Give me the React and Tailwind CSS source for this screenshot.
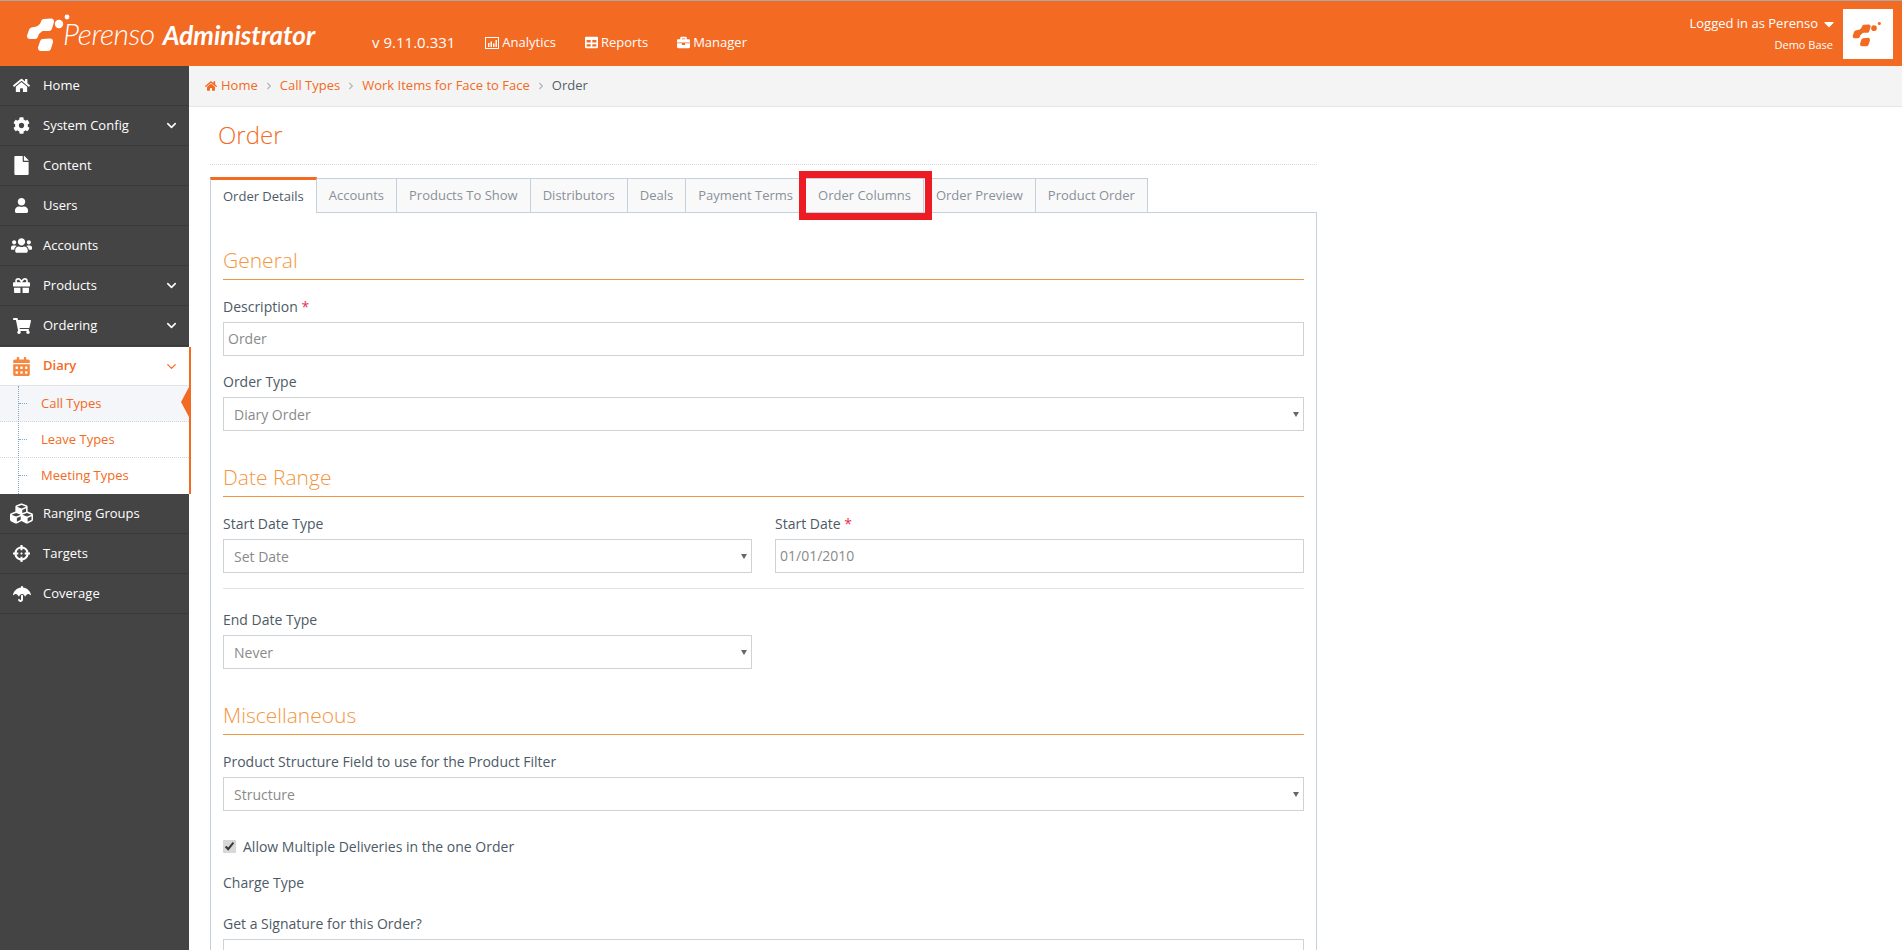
import { ChevronDown } from 'lucide-react';
import { FaBriefcase, FaCalendarAlt, FaCaretDown, FaChevronRight, FaCog, FaCrosshairs, FaCubes, FaFile, FaGift, FaHome, FaShoppingCart, FaTable, FaUmbrella, FaUser, FaUsers } from 'react-icons/fa';

const menuTop = [
  { label: 'Home', icon: FaHome, size: 'text-[17px]' },
  { label: 'System Config', icon: FaCog, size: 'text-[17px]', arrow: true },
  { label: 'Content', icon: FaFile, size: 'text-[19px]' },
  { label: 'Users', icon: FaUser, size: 'text-[15px]' },
  { label: 'Accounts', icon: FaUsers, size: 'text-[21px]' },
  { label: 'Products', icon: FaGift, size: 'text-[17px]', arrow: true },
  { label: 'Ordering', icon: FaShoppingCart, size: 'text-[18px]', arrow: true },
];
const menuBottom = [
  { label: 'Ranging Groups', icon: FaCubes, size: 'text-[23px]' },
  { label: 'Targets', icon: FaCrosshairs, size: 'text-[17px]' },
  { label: 'Coverage', icon: FaUmbrella, size: 'text-[18px]' },
];
const subItems = ['Call Types', 'Leave Types', 'Meeting Types'];
const tabs = ['Order Details', 'Accounts', 'Products To Show', 'Distributors', 'Deals', 'Payment Terms', 'Order Columns', 'Order Preview', 'Product Order'];

function LogoMark({ className, color }) {
  return (
    <svg viewBox="26 10 48 40" className={className} fill={color} stroke={color} strokeLinejoin="round">
      <polygon points="32,28.5 37,27.5 35,34 30,34" strokeWidth="6" />
      <polygon points="44,20 51,19.5 49,26 42,26" strokeWidth="6" />
      <polygon points="36,28 44,21 43,26 37,31" strokeWidth="4" />
      <polygon points="43,40 50,39.5 48,46 41,46" strokeWidth="6" />
      <circle cx="59" cy="22" r="4.2" stroke="none" />
      <circle cx="67" cy="15" r="2.4" stroke="none" />
    </svg>
  );
}

function BarBox({ className }) {
  return (
    <svg viewBox="0 0 14 12" className={className} fill="none">
      <rect x="0.5" y="0.5" width="13" height="11" stroke="currentColor" />
      <path d="M3 6h1.5v4H3zM5.5 4.5H7V10H5.5zM8 6.5h1.5V10H8zM10.5 3H12v7h-1.5z" fill="currentColor" />
    </svg>
  );
}

function MenuRow({ item }) {
  const Icon = item.icon;
  return (
    <div className="flex h-10 items-center border-b border-[#3a3a3a] text-[13px] text-white">
      <div className="flex w-[43px] justify-center"><Icon className={item.size} /></div>
      <span className="flex-1">{item.label}</span>
      {item.arrow && <ChevronDown size={15} strokeWidth={2.5} className="mr-[10px]" />}
    </div>
  );
}

function Section({ title }) {
  return (
    <div className="mb-[17px] flex h-[50px] items-end border-b border-[#f0983f] pb-[3px] text-[21px] font-light text-[#f4963d]">
      {title}
    </div>
  );
}

function Field({ label, required, children, className = 'mb-4' }) {
  return (
    <div className={className}>
      <label className="mb-[6px] block h-[19px] pt-[1px] text-[14px] leading-[18px] text-[#4d5a66]">
        {label}
        {required && <span className="text-[#e8304f]"> *</span>}
      </label>
      {children}
    </div>
  );
}

function TextBox({ value }) {
  return <input readOnly value={value} className="h-[34px] w-full border border-[#d0d3d6] bg-white px-[4px] pb-[1px] text-[14px] text-[#8a8a8a] outline-none" />;
}

function SelectBox({ value }) {
  return (
    <div className="relative h-[34px] w-full border border-[#d0d3d6] bg-white pl-[10px] text-[14px] leading-[33px] text-[#8a8a8a]">
      {value}
      <span className="absolute right-[4px] top-[14px] h-0 w-0 border-x-[3px] border-t-[5px] border-x-transparent border-t-[#666]" />
    </div>
  );
}

export default function App() {
  return (
    <div className="h-[950px] overflow-hidden bg-white text-[13px]" style={{ fontFamily: '"Open Sans", sans-serif' }}>
      <header className="flex h-[66px] items-center border-t border-[#a8a8a8] bg-[#f36a23] text-white">
        <LogoMark className="ml-[26px] mt-[-4px] h-[40px] w-[48px]" color="#ffffff" />
        <div className="ml-[-11px] mt-[-1px] flex items-baseline italic" style={{ fontFamily: 'Lato, sans-serif' }}>
          <span className="text-[30px] font-light tracking-[-0.5px]">Perenso</span>
          <span className="ml-[8px] text-[26px] font-bold">Administrator</span>
        </div>
        <span className="ml-[57px] mt-[18px] text-[15px]">v 9.11.0.331</span>
        <nav className="ml-[30px] mt-[18px] flex items-center gap-[29px] text-[13px]">
          <span className="flex items-center gap-[3px]"><BarBox className="h-[12px] w-[14px]" />Analytics</span>
          <span className="flex items-center gap-[3px]"><FaTable className="text-[13px]" />Reports</span>
          <span className="flex items-center gap-[3px]"><FaBriefcase className="text-[13px]" />Manager</span>
        </nav>
        <div className="ml-auto mr-[10px] text-right">
          <div className="mr-[-4px] flex items-center justify-end gap-[3px] text-[13px]">Logged in as Perenso <FaCaretDown className="text-[16px]" /></div>
          <div className="mt-[3px] text-[11px]">Demo Base</div>
        </div>
        <div className="mr-[9px] flex h-[50px] w-[50px] items-center justify-center bg-white">
          <LogoMark className="h-[27px] w-[32px]" color="#f36a23" />
        </div>
      </header>

      <div className="flex h-[884px]">
        <aside className="w-[189px] shrink-0 bg-[#444444]">
          {menuTop.map((item) => <MenuRow key={item.label} item={item} />)}
          <div className="relative mt-[1px] w-[191px] border-r-[2px] border-[#f36a23] bg-white">
            <div className="flex h-[39px] items-center border-b border-[#e3e3e3] text-[13px] font-semibold text-[#f36a23]">
              <div className="flex w-[43px] justify-center"><FaCalendarAlt className="text-[19px] text-[#f5873f]" /></div>
              <span className="flex-1">Diary</span>
              <ChevronDown size={15} strokeWidth={2} className="mr-[10px]" />
            </div>
            <div className="relative">
              {subItems.map((label, i) => (
                <div key={label} className={`relative flex h-[36px] items-center pl-[41px] text-[13px] text-[#f36a23] ${i === 0 ? 'bg-[#f4f6f9]' : ''} ${i < 2 ? 'border-b border-dotted border-[#d5d5d5]' : ''}`}>
                  <span className="absolute left-[19px] top-[17px] w-[8px] border-t border-dotted border-[#7fa8cc]" />
                  {label}
                </div>
              ))}
              <span className="absolute bottom-0 left-[18px] top-0 border-l border-dotted border-[#7fa8cc]" />
              <span className="absolute right-0 top-[1px] h-0 w-0 border-y-[15px] border-r-[8px] border-y-transparent border-r-[#f36a23]" />
            </div>
          </div>
          {menuBottom.map((item) => <MenuRow key={item.label} item={item} />)}
        </aside>

        <main className="min-w-0 flex-1">
          <div className="flex h-[41px] items-center gap-[7px] border-b border-[#e5e5e5] bg-[#f4f4f4] pl-[16px] text-[13px] text-[#f36a23]">
            <span className="flex items-center gap-[4px]"><FaHome className="text-[12px]" />Home</span>
            <FaChevronRight className="text-[8px] text-[#b5b5b5]" />
            <span>Call Types</span>
            <FaChevronRight className="text-[8px] text-[#b5b5b5]" />
            <span>Work Items for Face to Face</span>
            <FaChevronRight className="text-[8px] text-[#b5b5b5]" />
            <span className="text-[#555e68]">Order</span>
          </div>

          <div className="w-[1128px] pl-[21px]">
            <div className="h-[58px] border-b border-dotted border-[#d8d8d8] pl-[8px] pt-[13px] text-[24px] font-light leading-[30px] text-[#f36a23]">Order</div>

            <div className="mt-[12px] flex h-[36px] items-stretch">
              {tabs.map((tab, i) => (
                <div key={tab} className={i === 0
                  ? 'relative z-10 flex h-[36px] items-center border-r border-t-[3px] border-l border-[#c5d0dc] border-t-[#f36a23] bg-white px-3 text-[#4d5a66]'
                  : 'relative mt-[1px] flex h-[34px] items-center border-r border-t border-[#c5d0dc] bg-[#f9f9f9] px-3 text-[#8a9099]'}>
                  {tab}
                  {tab === 'Order Columns' && <span className="absolute bottom-[-8px] left-[-7px] right-[-9px] top-[-8px] z-20 border-[7px] border-[#ed1c24]" />}
                </div>
              ))}
            </div>

            <div className="mt-[-1px] border border-[#c5d0dc] px-3 pt-[17px]">
              <Section title="General" />
              <Field label="Description" required><TextBox value="Order" /></Field>
              <Field label="Order Type"><SelectBox value="Diary Order" /></Field>

              <Section title="Date Range" />
              <div className="grid grid-cols-2 gap-x-[23px]">
                <Field label="Start Date Type" className="mb-[15px]"><SelectBox value="Set Date" /></Field>
                <Field label="Start Date" required className="mb-[15px]"><TextBox value="01/01/2010" /></Field>
              </div>
              <hr className="mb-[21px] border-[#e3e3e3]" />
              <div className="grid grid-cols-2 gap-x-[23px]">
                <Field label="End Date Type"><SelectBox value="Never" /></Field>
              </div>

              <Section title="Miscellaneous" />
              <Field label="Product Structure Field to use for the Product Filter"><SelectBox value="Structure" /></Field>
              <label className="mt-[26px] flex h-[18px] items-center gap-[7px] text-[14px] text-[#4d5a66]">
                <input type="checkbox" defaultChecked className="h-[13px] w-[13px] accent-[#d8d8d8]" />
                Allow Multiple Deliveries in the one Order
              </label>
              <div className="mt-[19px] h-[18px] text-[14px] leading-[18px] text-[#4d5a66]">Charge Type</div>
              <Field label="Get a Signature for this Order?" className="mb-4 mt-[22px]"><SelectBox value="" /></Field>
            </div>
          </div>
        </main>
      </div>
    </div>
  );
}
